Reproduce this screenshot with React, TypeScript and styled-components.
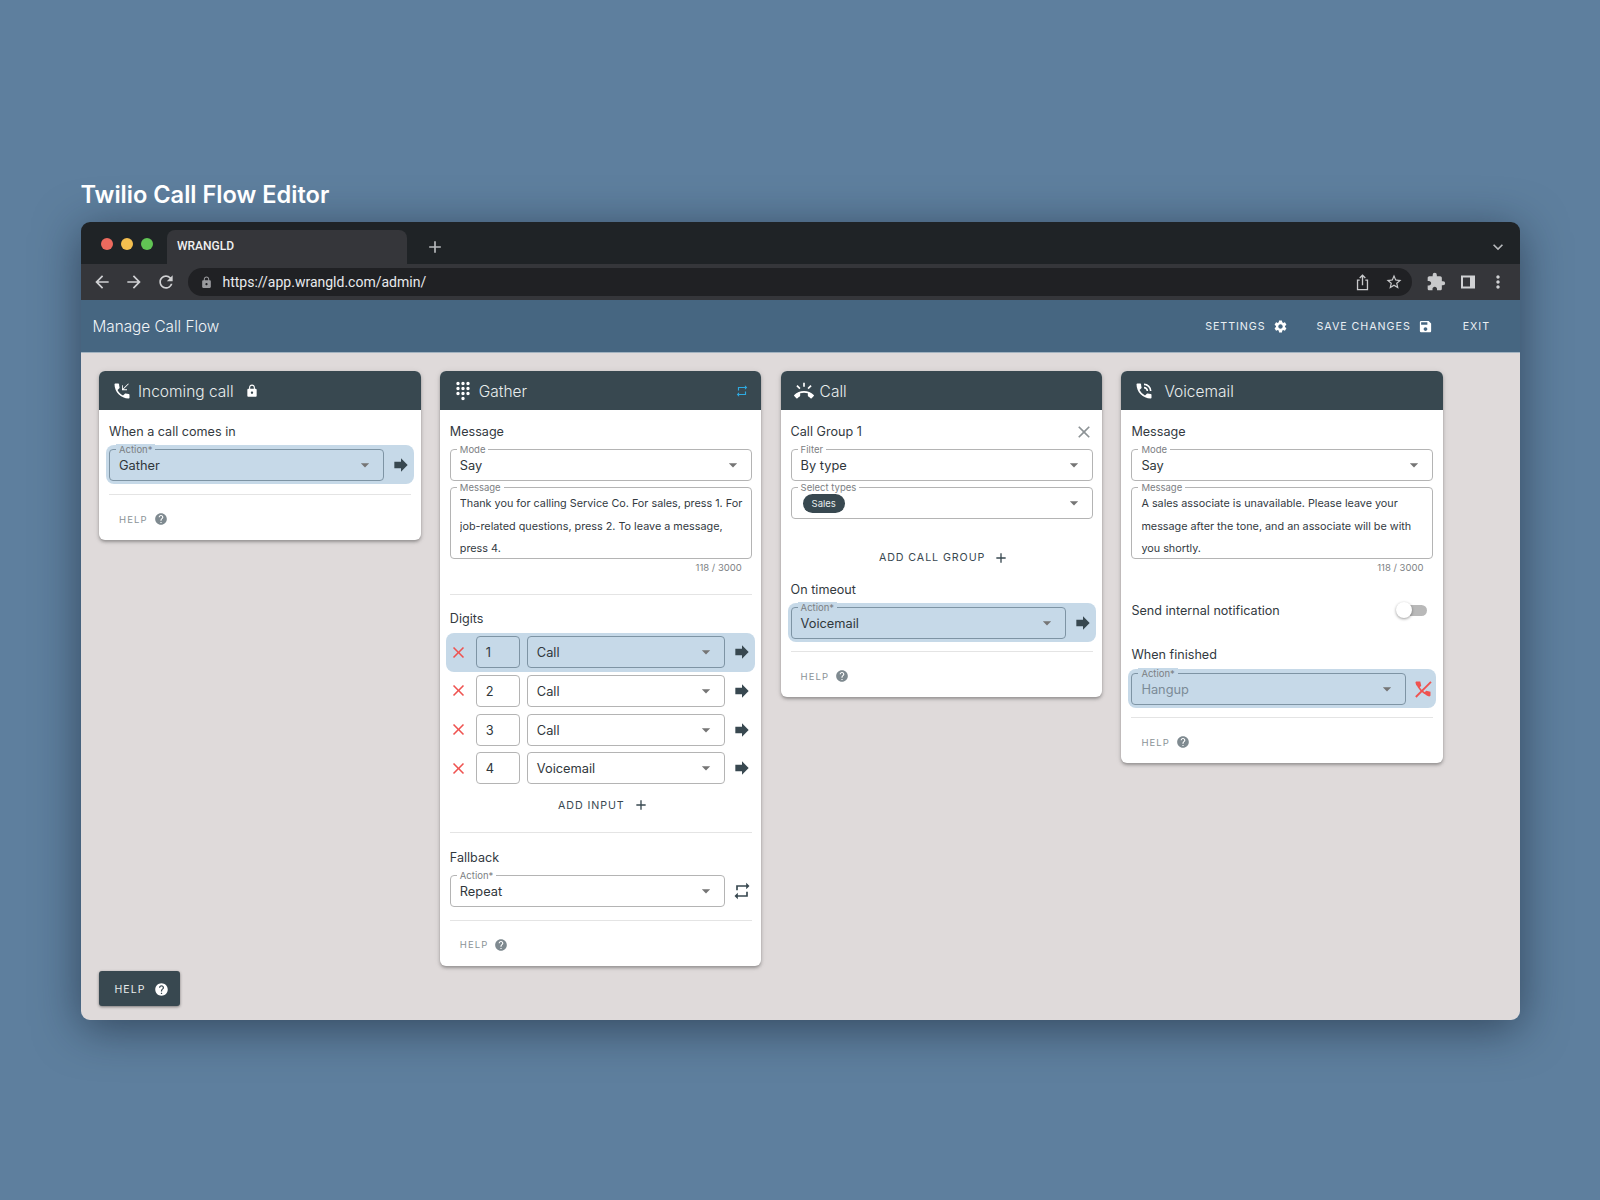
import React, { ReactNode } from "react";
import styled, { createGlobalStyle } from "styled-components";
import {
  MdAdd,
  MdArrowBack,
  MdArrowDropDown,
  MdArrowForward,
  MdClose,
  MdDialpad,
  MdExpandMore,
  MdExtension,
  MdForward,
  MdHelp,
  MdLock,
  MdMoreVert,
  MdPhoneCallback,
  MdPhoneInTalk,
  MdRefresh,
  MdRepeat,
  MdRingVolume,
  MdSave,
  MdSettings,
  MdStarBorder,
} from "react-icons/md";

const UI_FONT = `"Inter", "Noto Sans", sans-serif`;
const HIGHLIGHT = "#c6d9e8";

const GlobalStyle = createGlobalStyle`
  html, body {
    margin: 0;
    background: #5e7f9e;
  }
  * {
    box-sizing: border-box;
  }
`;

const Page = styled.div`
  height: 1200px;
  padding: 179px 0 0 80.5px;
  font-family: ${UI_FONT};
  background: #5e7f9e;
  overflow: hidden;
`;

const PageTitle = styled.h1`
  margin: 0 0 11px;
  height: 32px;
  line-height: 32px;
  font-size: 23.6px;
  font-weight: 600;
  color: #fff;
`;

const BrowserWindow = styled.div`
  width: 1439.5px;
  height: 798px;
  display: flex;
  flex-direction: column;
  border-radius: 9px;
  overflow: hidden;
  box-shadow: 0 8px 46px rgba(15, 25, 40, 0.55);
`;

const TabStrip = styled.div`
  height: 42px;
  flex: none;
  display: flex;
  background: #1f2326;
  padding: 8px 12px 0 20.5px;
  align-items: stretch;
  color: #b8babd;
`;

const Lights = styled.div`
  display: flex;
  gap: 8px;
  width: 66px;
  padding-top: 8px;
`;

const Light = styled.span<{ $color: string }>`
  width: 12px;
  height: 12px;
  border-radius: 50%;
  background: ${(p) => p.$color};
`;

const Tab = styled.div`
  width: 240px;
  border-radius: 8px 8px 0 0;
  background: #35363a;
  color: #f0f0f0;
  font-family: Roboto, sans-serif;
  font-size: 12px;
  font-weight: 500;
  padding: 9px 10px 0;
`;

const NewTab = styled.div`
  margin-left: 18px;
  padding-top: 7px;
  font-size: 20px;
  line-height: 0;
`;

const Chevron = styled.div`
  margin-left: auto;
  padding-top: 7px;
  font-size: 20px;
`;

const Toolbar = styled.div`
  height: 36px;
  flex: none;
  display: flex;
  align-items: center;
  background: #35363a;
  padding: 0 8px 0 5.5px;
  color: #d0d1d3;
`;

const ToolButton = styled.span<{ $w?: number; $size?: number; $color?: string }>`
  width: ${(p) => p.$w ?? 32}px;
  display: flex;
  justify-content: center;
  font-size: ${(p) => p.$size ?? 20}px;
  color: ${(p) => p.$color ?? "inherit"};
`;

const AddressBar = styled.div`
  flex: 1;
  height: 28px;
  margin: 0 8px 0 6px;
  border-radius: 14px;
  background: #202124;
  display: flex;
  align-items: center;
  padding: 0 2px 0 12px;
  color: #c8c9cb;
`;

const Url = styled.span`
  margin-left: 9.5px;
  font-family: Roboto, sans-serif;
  font-size: 14px;
  color: #e8eaed;
  flex: 1;
`;

const AppBar = styled.div`
  height: 53px;
  flex: none;
  display: flex;
  align-items: center;
  background: #466681;
  border-bottom: 1px solid #a3b3c0;
  padding: 1px 30px 0 12px;
`;

const AppTitle = styled.div`
  flex: 1;
  font-size: 15.3px;
  font-weight: 300;
  color: #f0f4f7;
`;

const BarButton = styled.div<{ $ml: number }>`
  margin-left: ${(p) => p.$ml}px;
  display: flex;
  align-items: center;
  gap: 7px;
  font-size: 10.7px;
  letter-spacing: 0.95px;
  color: #eaf0f4;
  svg {
    font-size: 15px;
    color: #fff;
  }
`;

const Canvas = styled.div`
  flex: 1;
  background: #dfdada;
  padding: 18px 18.5px 14px;
  display: flex;
  flex-direction: column;
  justify-content: space-between;
`;

const Columns = styled.div`
  display: flex;
  align-items: flex-start;
  gap: 19.3px;
`;

const Card = styled.section`
  width: 321.5px;
  background: #fff;
  border-radius: 6px;
  overflow: hidden;
  box-shadow: 0 2px 3px rgba(40, 40, 40, 0.35), 0 1px 6px rgba(40, 40, 40, 0.1);
`;

const CardHeader = styled.header`
  height: 39px;
  display: flex;
  align-items: center;
  padding: 1px 12px 0 13px;
  background: #384850;
  color: #e8eded;
  font-size: 15.5px;
  font-weight: 300;
`;

const HeaderIcon = styled.span<{ $gap: number }>`
  display: flex;
  font-size: 20px;
  color: #fff;
  margin-right: ${(p) => p.$gap}px;
`;

const HeaderLock = styled.span`
  display: flex;
  font-size: 14px;
  color: #fff;
  margin-left: 11px;
`;

const HeaderEnd = styled.span`
  display: flex;
  font-size: 14px;
  color: #2ea9e0;
  margin-left: auto;
`;

const CardBody = styled.div`
  padding: 12px 9.5px 0 10px;
`;

const SectionLabel = styled.div<{ $top?: number; $bottom?: number }>`
  height: 18px;
  padding-top: 1px;
  margin-top: ${(p) => p.$top ?? 0}px;
  margin-bottom: ${(p) => p.$bottom ?? 9}px;
  font-size: 12.6px;
  color: #333a3f;
  display: flex;
  justify-content: space-between;
  align-items: center;
`;

const Field = styled.div<{ $h?: number; $w?: number; $tint?: boolean; $top?: number }>`
  position: relative;
  flex: ${(p) => (p.$w ? "none" : "1")};
  width: ${(p) => (p.$w ? `${p.$w}px` : "auto")};
  height: ${(p) => p.$h ?? 32}px;
  margin-top: ${(p) => p.$top ?? 0}px;
  border: 1px solid ${(p) => (p.$tint ? "#7e94a4" : "#b4b4b4")};
  border-radius: 4px;
  background: ${(p) => (p.$tint ? HIGHLIGHT : "#fff")};
  padding-left: 9px;
  display: flex;
  align-items: center;
`;

const FieldLabel = styled.span<{ $tint?: boolean }>`
  position: absolute;
  left: 6px;
  top: -6px;
  padding: 0 3px;
  height: 11px;
  line-height: 11px;
  font-size: 9.5px;
  color: #7c8083;
  background: ${(p) => (p.$tint ? HIGHLIGHT : "#fff")};
`;

const FieldValue = styled.span<{ $muted?: boolean }>`
  font-size: 12.8px;
  padding-top: 1px;
  color: ${(p) => (p.$muted ? "#7b8b97" : "#30373b")};
`;

const Caret = styled.span`
  position: absolute;
  right: 8px;
  top: 5px;
  display: flex;
  font-size: 20px;
  color: #757575;
`;

const MessageText = styled.div`
  height: 100%;
  overflow: hidden;
  padding: 5px 6px 0 0;
  font-size: 10.8px;
  line-height: 22.5px;
  color: #333a3f;
`;

const Counter = styled.div`
  height: 18px;
  line-height: 18px;
  padding-right: 10px;
  text-align: right;
  font-size: 9.5px;
  color: #7d8184;
`;

const ActionRow = styled.div<{ $tint?: boolean }>`
  margin: 0 -3px;
  height: 39px;
  padding: 4px 3px;
  display: flex;
  align-items: center;
  border-radius: 8px;
  background: ${(p) => (p.$tint ? HIGHLIGHT : "transparent")};
`;

const RowIcon = styled.span<{ $color?: string }>`
  flex: none;
  width: 20px;
  margin-left: 7px;
  display: flex;
  justify-content: center;
  font-size: 20px;
  color: ${(p) => p.$color ?? "#384850"};
`;

const Divider = styled.hr<{ $top?: number; $bottom?: number }>`
  margin: ${(p) => p.$top ?? 0}px 0 ${(p) => p.$bottom ?? 0}px;
  border: 0;
  height: 1px;
  background: #e4e4e4;
`;

const HelpRow = styled.div`
  height: 45px;
  padding: 3px 0 0 10px;
  display: flex;
  align-items: center;
  gap: 6px;
  font-size: 9.5px;
  letter-spacing: 1.1px;
  color: #8b9397;
  svg {
    font-size: 14px;
    color: #7f8a90;
  }
`;

const DigitRow = styled.div<{ $tint?: boolean }>`
  margin: 0 -3px 0 -4px;
  height: 38.67px;
  padding: 0 3px 0 0;
  display: flex;
  align-items: center;
  border-radius: 8px;
  background: ${(p) => (p.$tint ? HIGHLIGHT : "transparent")};
`;

const RemoveDigit = styled.span`
  flex: none;
  width: 26px;
  margin-right: 4px;
  display: flex;
  justify-content: center;
  font-size: 19px;
  color: #ef5350;
`;

const DigitGap = styled.span`
  flex: none;
  width: 7px;
`;

const AddButton = styled.div<{ $top?: number }>`
  height: 34px;
  margin-top: ${(p) => p.$top ?? 0}px;
  padding: 1px 0 0 5px;
  display: flex;
  align-items: center;
  justify-content: center;
  gap: 8px;
  font-size: 10.7px;
  letter-spacing: 0.9px;
  color: #384850;
  svg {
    font-size: 16px;
  }
`;

const CloseGroup = styled.span`
  display: flex;
  font-size: 20px;
  color: #8d9396;
  margin-right: -1px;
`;

const Chip = styled.span`
  height: 19px;
  padding: 0 9px;
  margin: 1px 0 0 2px;
  border-radius: 10px;
  background: #384850;
  color: #e8eded;
  font-size: 9.5px;
  line-height: 19px;
`;

const ToggleRow = styled.div`
  height: 20px;
  margin: 23px 0 25px;
  display: flex;
  align-items: center;
  justify-content: space-between;
  font-size: 12.6px;
  color: #333a3f;
`;

const ToggleTrack = styled.span`
  position: relative;
  width: 30px;
  height: 11px;
  margin-right: 6px;
  border-radius: 6px;
  background: #b9b9b9;
`;

const ToggleThumb = styled.span`
  position: absolute;
  left: -1px;
  top: -3px;
  width: 16px;
  height: 16px;
  border-radius: 50%;
  background: #fff;
  box-shadow: 0 1px 3px rgba(0, 0, 0, 0.4);
`;

const HelpFab = styled.div`
  width: 81px;
  height: 35px;
  display: flex;
  align-items: center;
  justify-content: center;
  gap: 8px;
  padding: 1px 0 0 4px;
  border-radius: 3px;
  background: #384850;
  color: #e8eded;
  font-size: 10.5px;
  letter-spacing: 1.1px;
  box-shadow: 0 1px 3px rgba(0, 0, 0, 0.45);
  svg {
    font-size: 15px;
    color: #fff;
  }
`;

const ShareIcon = () => (
  <svg width="15" height="17" viewBox="0 0 16 18" fill="none" stroke="currentColor" strokeWidth="1.4">
    <path d="M5 6.5H2.7v10h10.6v-10H11" />
    <path d="M8 12V1.5M5 4.2l3-3 3 3" />
  </svg>
);

const PanelIcon = () => (
  <svg width="16" height="16" viewBox="0 0 16 16">
    <rect x="1" y="1.5" width="14" height="13" fill="#d0d1d3" />
    <rect x="3" y="3.5" width="7" height="9" fill="#35363a" />
  </svg>
);

const HangupIcon = () => (
  <svg width="20" height="20" viewBox="0 0 24 24" fill="#ef5350">
    <path d="M3 4.5C3 3.7 3.6 3 4.4 3h4.3l1.2 5.2-2.6 2.6C5 9.2 3.4 7 3 4.5z" />
    <path d="M19.5 21c.8 0 1.5-.6 1.5-1.4v-4.3l-5.2-1.2-2.6 2.6c1.6 2.2 3.8 3.8 6.3 4.3z" />
    <path d="M6.5 9.5C8.5 13 11 15.5 14.5 17.5" fill="none" stroke="#ef5350" strokeWidth="2" />
    <path d="M21.6 3.4 3.4 21.6" stroke="#ef5350" strokeWidth="2.2" />
  </svg>
);

const ActionField = ({ value, tint, muted, icon, iconColor }: {
  value: string;
  tint?: boolean;
  muted?: boolean;
  icon: ReactNode;
  iconColor?: string;
}) => (
  <ActionRow $tint={tint}>
    <Field $tint={tint}>
      <FieldLabel $tint={tint}>Action*</FieldLabel>
      <FieldValue $muted={muted}>{value}</FieldValue>
      <Caret><MdArrowDropDown /></Caret>
    </Field>
    <RowIcon $color={iconColor}>{icon}</RowIcon>
  </ActionRow>
);

const SelectField = ({ label, value, top }: { label: string; value: string; top?: number }) => (
  <Field $top={top}>
    <FieldLabel>{label}</FieldLabel>
    <FieldValue>{value}</FieldValue>
    <Caret><MdArrowDropDown /></Caret>
  </Field>
);

const MessageField = ({ text }: { text: string }) => (
  <>
    <Field $h={72} $top={6}>
      <FieldLabel>Message</FieldLabel>
      <MessageText>{text}</MessageText>
    </Field>
    <Counter>118 / 3000</Counter>
  </>
);

const CardFooter = ({ top = 9 }: { top?: number }) => (
  <>
    <Divider $top={top} />
    <HelpRow>HELP <MdHelp /></HelpRow>
  </>
);

const digits = [
  { n: "1", action: "Call", tint: true },
  { n: "2", action: "Call" },
  { n: "3", action: "Call" },
  { n: "4", action: "Voicemail" },
];

export default function App() {
  return (
    <Page>
      <GlobalStyle />
      <PageTitle>Twilio Call Flow Editor</PageTitle>
      <BrowserWindow>
        <TabStrip>
          <Lights>
            <Light $color="#ed6a5e" />
            <Light $color="#f4bf4f" />
            <Light $color="#61c554" />
          </Lights>
          <Tab>WRANGLD</Tab>
          <NewTab><MdAdd /></NewTab>
          <Chevron><MdExpandMore /></Chevron>
        </TabStrip>
        <Toolbar>
          <ToolButton><MdArrowBack /></ToolButton>
          <ToolButton><MdArrowForward /></ToolButton>
          <ToolButton><MdRefresh /></ToolButton>
          <AddressBar>
            <MdLock size={13} color="#9a9b9e" />
            <Url>https://app.wrangld.com/admin/</Url>
            <ToolButton><ShareIcon /></ToolButton>
            <ToolButton $size={18}><MdStarBorder /></ToolButton>
          </AddressBar>
          <ToolButton $color="#c8c9cb"><MdExtension /></ToolButton>
          <ToolButton><PanelIcon /></ToolButton>
          <ToolButton $w={28}><MdMoreVert /></ToolButton>
        </Toolbar>
        <AppBar>
          <AppTitle>Manage Call Flow</AppTitle>
          <BarButton $ml={0}>SETTINGS <MdSettings /></BarButton>
          <BarButton $ml={29}>SAVE CHANGES <MdSave /></BarButton>
          <BarButton $ml={30}>EXIT</BarButton>
        </AppBar>
        <Canvas>
          <Columns>
            <Card>
              <CardHeader>
                <HeaderIcon $gap={6}><MdPhoneCallback /></HeaderIcon>
                Incoming call
                <HeaderLock><MdLock /></HeaderLock>
              </CardHeader>
              <CardBody>
                <SectionLabel $bottom={5}>When a call comes in</SectionLabel>
                <ActionField value="Gather" tint icon={<MdForward />} />
                <CardFooter top={10} />
              </CardBody>
            </Card>

            <Card>
              <CardHeader>
                <HeaderIcon $gap={6}><MdDialpad /></HeaderIcon>
                Gather
                <HeaderEnd><MdRepeat /></HeaderEnd>
              </CardHeader>
              <CardBody>
                <SectionLabel>Message</SectionLabel>
                <SelectField label="Mode" value="Say" />
                <MessageField text="Thank you for calling Service Co. For sales, press 1. For job-related questions, press 2. To leave a message, press 4." />
                <Divider $top={17} $bottom={14} />
                <SectionLabel $bottom={6}>Digits</SectionLabel>
                {digits.map((d) => (
                  <DigitRow key={d.n} $tint={d.tint}>
                    <RemoveDigit><MdClose /></RemoveDigit>
                    <Field $w={44} $tint={d.tint}><FieldValue>{d.n}</FieldValue></Field>
                    <DigitGap />
                    <Field $tint={d.tint}>
                      <FieldValue>{d.action}</FieldValue>
                      <Caret><MdArrowDropDown /></Caret>
                    </Field>
                    <RowIcon><MdForward /></RowIcon>
                  </DigitRow>
                ))}
                <AddButton>ADD INPUT <MdAdd /></AddButton>
                <Divider $top={10} $bottom={15} />
                <SectionLabel $bottom={6}>Fallback</SectionLabel>
                <ActionField value="Repeat" icon={<MdRepeat />} />
                <CardFooter />
              </CardBody>
            </Card>

            <Card>
              <CardHeader>
                <HeaderIcon $gap={6}><MdRingVolume /></HeaderIcon>
                Call
              </CardHeader>
              <CardBody>
                <SectionLabel>
                  Call Group 1
                  <CloseGroup><MdClose /></CloseGroup>
                </SectionLabel>
                <SelectField label="Filter" value="By type" />
                <Field $top={6}>
                  <FieldLabel>Select types</FieldLabel>
                  <Chip>Sales</Chip>
                  <Caret><MdArrowDropDown /></Caret>
                </Field>
                <AddButton $top={21}>ADD CALL GROUP <MdAdd /></AddButton>
                <SectionLabel $top={6} $bottom={5}>On timeout</SectionLabel>
                <ActionField value="Voicemail" tint icon={<MdForward />} />
                <CardFooter />
              </CardBody>
            </Card>

            <Card>
              <CardHeader>
                <HeaderIcon $gap={10}><MdPhoneInTalk /></HeaderIcon>
                Voicemail
              </CardHeader>
              <CardBody>
                <SectionLabel>Message</SectionLabel>
                <SelectField label="Mode" value="Say" />
                <MessageField text="A sales associate is unavailable. Please leave your message after the tone, and an associate will be with you shortly." />
                <ToggleRow>
                  Send internal notification
                  <ToggleTrack><ToggleThumb /></ToggleTrack>
                </ToggleRow>
                <SectionLabel $bottom={6}>When finished</SectionLabel>
                <ActionField value="Hangup" tint muted icon={<HangupIcon />} iconColor="#ef5350" />
                <CardFooter />
              </CardBody>
            </Card>
          </Columns>
          <HelpFab>HELP <MdHelp /></HelpFab>
        </Canvas>
      </BrowserWindow>
    </Page>
  );
}
